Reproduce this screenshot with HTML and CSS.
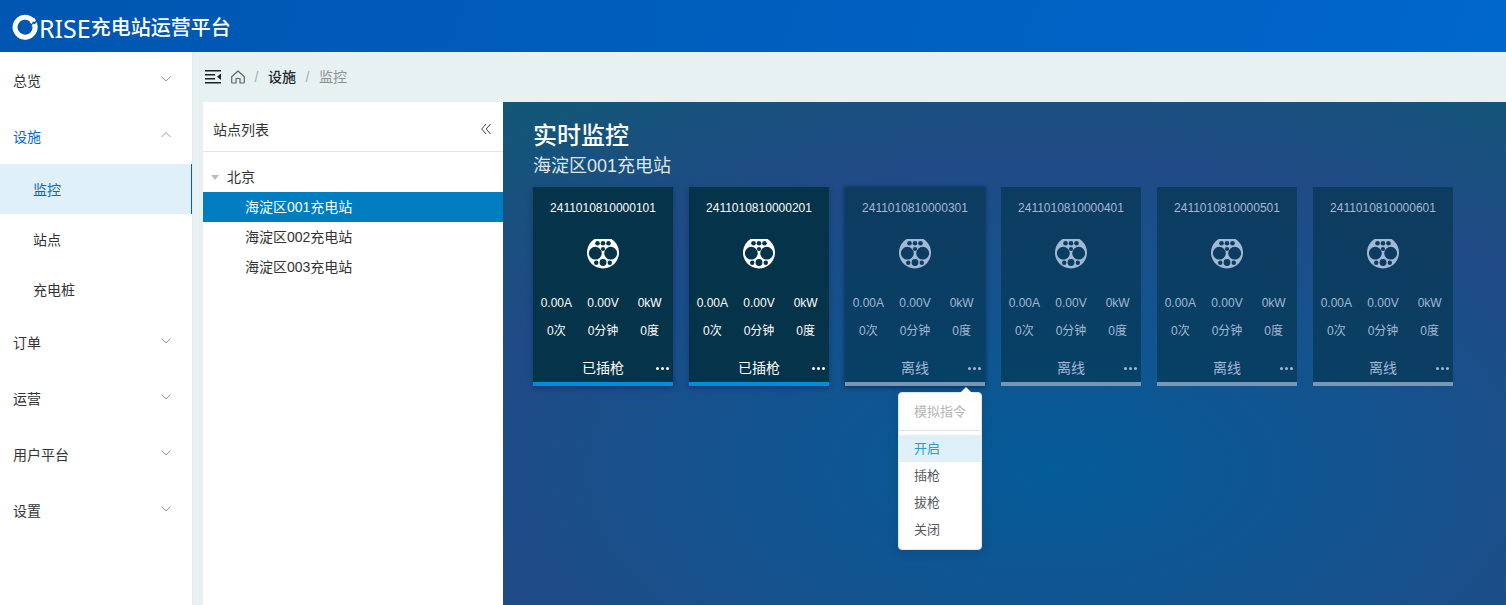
FILE: index.html
```html
<!DOCTYPE html>
<html lang="zh-CN">
<head>
<meta charset="utf-8">
<title>RISE充电站运营平台</title>
<link rel="stylesheet" href="styles.css">
</head>
<body>
<svg class="symbols" aria-hidden="true">
  <symbol id="down" viewBox="0 0 12 12"><path d="M1.500 3.500 6 8l4.500-4.500" fill="none" stroke="currentColor"/></symbol>
  <symbol id="up" viewBox="0 0 12 12"><path d="M1.500 8 6 3.500 10.500 8" fill="none" stroke="currentColor"/></symbol>
  <symbol id="plug" viewBox="0 0 32 32">
    <mask id="holes">
      <rect width="32" height="32" fill="#fff"/>
      <circle cx="10.500" cy="5.300" r="2.300"/><circle cx="16" cy="5.300" r="2.300"/><circle cx="21.500" cy="5.300" r="2.300"/>
      <circle cx="16" cy="11" r="2.100"/>
      <circle cx="8.300" cy="15.200" r="6.400"/><circle cx="23.700" cy="15.200" r="6.400"/>
      <circle cx="9.200" cy="24.800" r="2.200"/><circle cx="22.800" cy="24.800" r="2.200"/><circle cx="16" cy="24.500" r="3.400"/>
    </mask>
    <path d="M7.500 1h17A16 16 0 1 1 7.500 1Z" fill="currentColor" mask="url(#holes)"/>
  </symbol>
</svg>
<div class="app">
  <header class="topbar">
    <svg class="logo" viewBox="0 0 26 26" aria-hidden="true">
      <path d="M20 6A10 10 0 1 0 23 12" fill="none" stroke="#fff" stroke-width="5"/>
      <path d="M17.500 8 22 3.500l2 3-1.500 1.500-1.500-.5-1.500 2.500ZM19.500 12.500l1.500-3 1.700.7L24.800 8l.9 4.700Z" fill="#fff"/>
    </svg>
    <h1 class="brand"><span class="brand-latin">RISE</span>充电站运营平台</h1>
  </header>
  <div class="body">
    <nav class="side">
      <button class="group">总览<svg class="chev"><use href="#down"/></svg></button>
      <button class="group open">设施<svg class="chev"><use href="#up"/></svg></button>
      <a class="sub active" href="#monitor">监控</a>
      <a class="sub" href="#sites">站点</a>
      <a class="sub" href="#piles">充电桩</a>
      <button class="group">订单<svg class="chev"><use href="#down"/></svg></button>
      <button class="group">运营<svg class="chev"><use href="#down"/></svg></button>
      <button class="group">用户平台<svg class="chev"><use href="#down"/></svg></button>
      <button class="group">设置<svg class="chev"><use href="#down"/></svg></button>
    </nav>
    <div class="content">
      <div class="crumbs">
        <button class="icon-button" aria-label="收起菜单"><svg width="16" height="16" viewBox="0 0 16 16"><path d="M0 1h16v1.500H0zM0 5h10v1.500H0zM0 9h10v1.500H0zM0 13h16v1.500H0zM16 4.500v6.500L12 7.750z" fill="#1d2124"/></svg></button>
        <a class="home" href="#home" aria-label="首页"><svg width="14" height="14" viewBox="0 0 14 14"><path d="M.700 6.800 7 1l6.300 5.800V12.200Q13.300 13 12.500 13H9V8.500H5V13H1.500Q.700 13 .700 12.200Z" fill="none" stroke="#5b6468" stroke-width="1.200" stroke-linejoin="round"/></svg></a>
        <span class="slash">/</span><a class="crumb" href="#facility">设施</a><span class="slash">/</span><span class="here">监控</span>
      </div>
      <div class="panes">
        <aside class="sites">
          <div class="sites-head"><h2>站点列表</h2>
            <button class="icon-button fold" aria-label="折叠列表"><svg width="10" height="12" viewBox="0 0 10 12"><path d="M5 1 .700 6 5 11M9.500 1 5.200 6l4.300 5" fill="none" stroke="#444"/></svg></button>
          </div>
          <ul class="tree">
            <li><button class="region"><span class="caret"></span>北京</button>
              <ul>
                <li><a class="site selected" href="#s1">海淀区001充电站</a></li>
                <li><a class="site" href="#s2">海淀区002充电站</a></li>
                <li><a class="site" href="#s3">海淀区003充电站</a></li>
              </ul>
            </li>
          </ul>
        </aside>
        <main class="monitor">
          <h2 class="title">实时监控</h2>
          <p class="station">海淀区001充电站</p>
          <div class="cards" id="cards"></div>
        </main>
      </div>
    </div>
  </div>
</div>
<template id="card">
  <article class="card">
    <h3 class="serial"></h3>
    <svg class="plug"><use href="#plug"/></svg>
    <div class="stats"><span>0.00A</span><span>0.00V</span><span>0kW</span><span>0次</span><span>0分钟</span><span>0度</span></div>
    <div class="foot"><span class="state"></span><button class="more" aria-label="更多"><i></i><i></i><i></i></button></div>
  </article>
</template>
<template id="menu">
  <div class="menu">
    <div class="menu-title">模拟指令</div>
    <button class="item current">开启</button>
    <button class="item">插枪</button>
    <button class="item">拔枪</button>
    <button class="item">关闭</button>
  </div>
</template>
<script src="app.js"></script>
</body>
</html>
```
FILE: styles.css
```css
* { box-sizing: border-box; }
body, h1, h2, h3, p, ul { margin: 0; padding: 0; }
ul { list-style: none; }
body { font: 14px/20px "Liberation Sans", "Noto Sans CJK SC", sans-serif; color: #333; }
button { font: inherit; color: inherit; background: none; border: 0; padding: 0; text-align: left; cursor: pointer; }
a { color: inherit; text-decoration: none; }
.symbols { position: absolute; width: 0; height: 0; }
.app { display: flex; flex-direction: column; min-height: 100vh; }
.topbar { height: 52px; flex: none; display: flex; align-items: center; padding: 2px 12px 0; color: #fff; background: linear-gradient(110deg, #0056b0, #0067cc); }
.logo { width: 26px; height: 26px; }
.brand { display: flex; align-items: center; font-size: 20px; line-height: 28px; font-weight: 500; padding: 2px 0 0 1px; }
.brand-latin { font-family: "Noto Sans", sans-serif; font-size: 25px; font-weight: 400; }
.body { flex: 1; display: flex; }
.side { width: 193px; flex: none; background: #fff; border-right: 1px solid #e6e9ea; display: flex; flex-direction: column; }
.group { height: 56px; display: flex; align-items: center; justify-content: space-between; padding: 2px 20px 0 13px; }
.group.open { color: #0068d0; }
.chev { width: 12px; height: 12px; color: #999; margin-bottom: 4px; }
.sub { height: 50px; display: flex; align-items: center; padding: 2px 0 0 33px; }
.sub.active { background: #dff0f9; color: #0068d0; border-right: 1px solid #0060c0; }
.content { flex: 1; min-width: 0; background: #e8f1f1; display: flex; flex-direction: column; padding-left: 10px; }
.crumbs { height: 50px; display: flex; align-items: center; padding-left: 2px; }
.icon-button { display: flex; }
.home { display: flex; margin-left: 10px; }
.slash { width: 23px; text-align: center; color: #a5adb0; }
.crumb { font-weight: 500; color: #22282b; }
.here { color: #8b9294; }
.panes { flex: 1; display: flex; }
.sites { width: 300px; flex: none; background: #fff; }
.sites-head { height: 50px; display: flex; align-items: center; justify-content: space-between; padding: 6px 12px 0 10px; border-bottom: 1px solid #e2e4e6; }
.sites-head h2 { font-size: 14px; line-height: 20px; font-weight: 400; }
.fold { padding-bottom: 2px; }
.tree { padding-top: 10px; }
.region { display: flex; align-items: center; gap: 8px; height: 30px; padding-left: 8px; width: 100%; }
.caret { border: 4px solid transparent; border-top: 5px solid #b9bcc8; border-bottom: 0; }
.site { display: block; line-height: 30px; padding-left: 42px; }
.site.selected { background: #007dc1; color: #fff; }
.monitor { flex: 1; min-width: 0; padding: 18px 30px; color: #fff; background: radial-gradient(88% 93% at 55% 73%, #045c99 0%, #204b86 67%, #115776 100%); }
.title { font-size: 24px; line-height: 32px; font-weight: 500; }
.station { font-size: 18px; line-height: 28px; color: #dfe6f0; }
.cards { display: flex; flex-wrap: wrap; gap: 16px; padding-top: 7px; }
.card { position: relative; width: 140px; display: flex; flex-direction: column; align-items: center; padding-top: 12px; background: #053349; border-bottom: 4px solid #008ed6; box-shadow: 0 2px 6px rgba(0, 20, 50, .35); }
.offline { background: rgba(4, 50, 72, .6); border-color: #7896b5; color: #a3b9d3; box-shadow: none; }
.hover { box-shadow: 0 1px 4px 1px rgba(0, 20, 50, .45); }
.serial { font-size: 12px; line-height: 18px; font-weight: 400; }
.plug { width: 32px; height: 32px; margin-top: 21px; }
.stats { width: 140px; display: grid; grid-template-columns: repeat(3, 1fr); margin-top: 19px; font-size: 12px; line-height: 28px; text-align: center; }
.foot { width: 100%; height: 37px; display: grid; grid-template-columns: 1fr auto 1fr; align-items: center; padding: 8px 4px 0; }
.state { grid-column: 2; }
.more { justify-self: end; display: flex; gap: 2px; padding-top: 2px; }
.more i { width: 3px; height: 3px; border-radius: 50%; background: currentColor; }
.menu { position: absolute; z-index: 1; top: 205px; right: 3px; width: 84px; padding: 5px 0 6px; background: #fff; border: 1px solid #dfe5f3; border-radius: 4px; box-shadow: 0 2px 12px rgba(0, 0, 0, .12); font-size: 13px; line-height: 27px; color: #55595f; }
.menu::before { content: ""; position: absolute; right: 9px; top: -6px; border: 6px solid transparent; border-top: 0; border-bottom-color: #fff; }
.menu-title { color: #b5b5b5; line-height: 28px; padding: 0 15px 4px; margin-bottom: 4px; border-bottom: 1px solid #dfe5f3; }
.item { display: block; width: 100%; padding: 0 15px; }
.current { background: #dff0f9; color: #2b9dd0; }
```
FILE: app.js
```js
const cards = document.getElementById('cards');
for (let n = 1; n <= 6; n++) {
  const card = document.getElementById('card').content.cloneNode(true).firstElementChild;
  card.querySelector('.serial').textContent = '2411010810000' + n + '01';
  card.querySelector('.state').textContent = n < 3 ? '已插枪' : '离线';
  if (n > 2) card.classList.add('offline');
  if (n === 3) {
    card.classList.add('hover');
    card.append(document.getElementById('menu').content.cloneNode(true));
  }
  cards.append(card);
}
```
